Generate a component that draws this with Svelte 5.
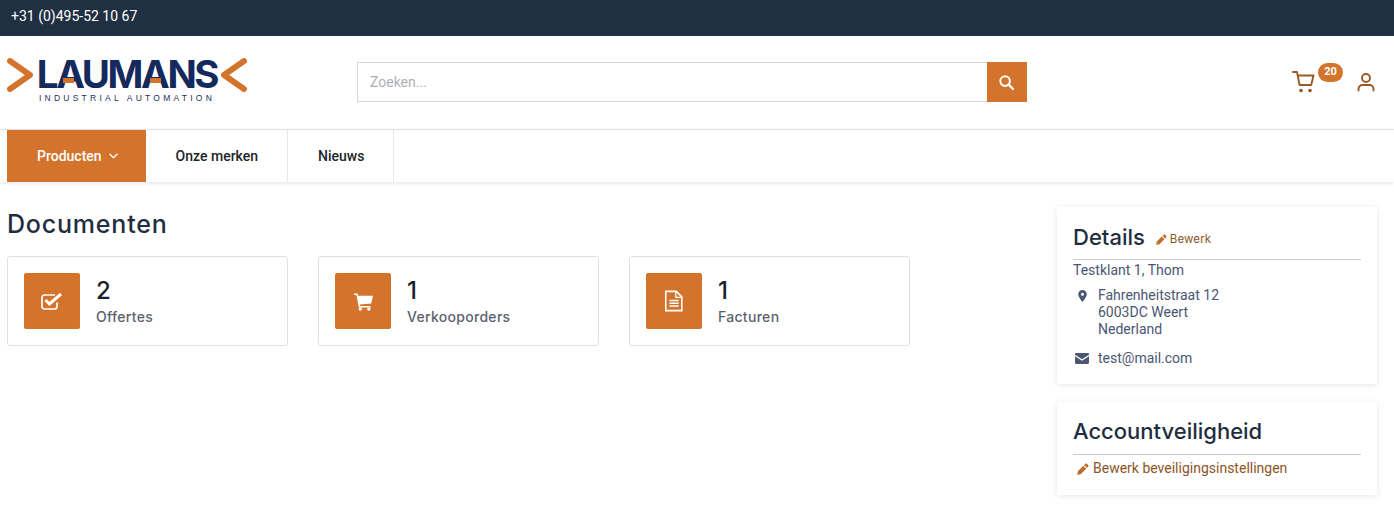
<script>
    const docs = [
        { count: 2, label: "Offertes", icon: "check" },
        { count: 1, label: "Verkooporders", icon: "cart" },
        { count: 1, label: "Facturen", icon: "file" }
    ];
</script>

{#snippet pencil()}
    <svg class="pencil" viewBox="0 0 12 12" aria-hidden="true">
        <path d="M8.400 .7a1 1 0 0 1 1.400 0l1.500 1.500a1 1 0 0 1 0 1.400L10 4.900 7.100 2zM6.300 2.800l2.900 2.900-5.500 5.500-3.500.7.7-3.600z" fill="currentColor" />
    </svg>
{/snippet}

<div class="topbar">+31 (0)495-52 10 67</div>

<header class="header">
    <div class="logo">
        <svg class="chev" viewBox="0 0 26 34" aria-hidden="true">
            <path d="M3 3l20 14L3 31" fill="none" stroke="#d4742c" stroke-width="5.800" stroke-linecap="round" stroke-linejoin="round" />
        </svg>
        <div class="logo-text">
            <span class="logo-name">LAUMANS</span>
            <span class="logo-sub">INDUSTRIAL AUTOMATION</span>
            <span class="bar first"></span>
            <span class="bar second"></span>
        </div>
        <svg class="chev" viewBox="0 0 26 34" aria-hidden="true">
            <path d="M23 3L3 17l20 14" fill="none" stroke="#d4742c" stroke-width="5.800" stroke-linecap="round" stroke-linejoin="round" />
        </svg>
    </div>

    <div class="search">
        <input type="text" placeholder="Zoeken..." />
        <button type="button" aria-label="Zoeken">
            <svg viewBox="0.500 0.500 15 15" width="15" height="15" aria-hidden="true">
                <circle cx="6.600" cy="6.600" r="4.800" fill="none" stroke="#fff" stroke-width="2" />
                <path d="M10.200 10.200l4.300 4.300" stroke="#fff" stroke-width="2.400" stroke-linecap="round" />
            </svg>
        </button>
    </div>

    <div class="header-icons">
        <div class="cart">
            <svg viewBox="0 0 24 24" width="24" height="24" fill="none" stroke="#9a5a26" stroke-width="1.900" stroke-linecap="round" stroke-linejoin="round" aria-hidden="true">
                <path d="M1 2h4l2.600 13h11.600l2.300-9.500H6" />
                <circle cx="9" cy="20.500" r="0.900" fill="#9a5a26" />
                <circle cx="18" cy="20.500" r="0.900" fill="#9a5a26" />
            </svg>
            <span class="badge">20</span>
        </div>
        <svg class="user" viewBox="0 0 20 20" width="20" height="20" fill="none" stroke="#9a5a26" stroke-width="1.900" stroke-linecap="round" aria-hidden="true">
            <circle cx="10" cy="6" r="4" />
            <path d="M2.500 18.500v-1.500a4 4 0 0 1 4-4h7a4 4 0 0 1 4 4v1.500" />
        </svg>
    </div>
</header>

<nav class="nav">
    <a class="nav-item active" href="#producten">
        Producten
        <svg viewBox="0 0 10 6" width="9" height="6" fill="none" stroke="#fff" stroke-width="1.400" stroke-linecap="round" stroke-linejoin="round" aria-hidden="true">
            <path d="M1 1l4 4 4-4" />
        </svg>
    </a>
    <a class="nav-item" href="#merken">Onze merken</a>
    <a class="nav-item" href="#nieuws">Nieuws</a>
</nav>

<main class="page">
    <section class="docs">
        <h1>Documenten</h1>
        <div class="doc-grid">
            {#each docs as doc}
                <div class="doc-card">
                    <div class="doc-icon">
                        {#if doc.icon === "check"}
                            <svg viewBox="0 0 22 18" width="22" height="18" fill="none" stroke="#fff" aria-hidden="true">
                                <path d="M16 10.500v4a2.500 2.500 0 0 1-2.500 2.500h-10A2.500 2.500 0 0 1 1 14.500V5.500A2.500 2.500 0 0 1 3.500 3H14" stroke-width="1.700" />
                                <path d="M4.500 8l4 4L20 2" stroke-width="3" />
                            </svg>
                        {:else if doc.icon === "cart"}
                            <svg viewBox="0 0 20 20" width="21" height="19" aria-hidden="true">
                                <path d="M0 1.500h3.800l.5 2.500H20l-1.800 8L6 13.200l.3 1.500H17.400v1.600H5L2.600 3.200H0z" fill="#fff" />
                                <circle cx="6.600" cy="18" r="1.800" fill="#fff" />
                                <circle cx="15.600" cy="18" r="1.800" fill="#fff" />
                            </svg>
                        {:else}
                            <svg viewBox="0 0 20 24" width="20" height="22" fill="none" stroke="#fff" aria-hidden="true">
                                <path d="M1 1.500h11.500l6 6V22.500H1z" stroke-width="1.700" />
                                <path d="M12 1.500V8h6.500" stroke-width="1.400" />
                                <path d="M5 11.500h10M5 14.500h10M5 17.500h10" stroke-width="1.500" />
                            </svg>
                        {/if}
                    </div>
                    <div class="doc-text">
                        <span class="doc-count">{doc.count}</span>
                        <span class="doc-label">{doc.label}</span>
                    </div>
                </div>
            {/each}
        </div>
    </section>

    <aside class="side">
        <div class="panel">
            <div class="panel-head">
                <h2>Details</h2>
                <a class="edit-small" href="#bewerk">{@render pencil()}Bewerk</a>
            </div>
            <div class="name">Testklant 1, Thom</div>
            <div class="row address">
                <svg class="row-icon" viewBox="0 0 10 14" width="9" height="12" aria-hidden="true">
                    <path fill-rule="evenodd" d="M5 0a5 5 0 0 1 5 5c0 2.600-3.400 7.200-5 9-1.600-1.800-5-6.400-5-9a5 5 0 0 1 5-5zm0 3.200a1.800 1.800 0 1 0 0 3.600 1.800 1.800 0 0 0 0-3.600z" fill="#4a5674" />
                </svg>
                <div>Fahrenheitstraat 12<br />6003DC Weert<br />Nederland</div>
            </div>
            <div class="row mail">
                <svg class="row-icon" viewBox="0 0 14 11" width="14" height="11" aria-hidden="true">
                    <path d="M0 1.200C0 .5.500 0 1.200 0h11.600c.7 0 1.200.5 1.200 1.200v.6L7 6.200 0 1.800zM0 3.300l7 4.400 7-4.400v6.500c0 .7-.5 1.200-1.200 1.200H1.200C.5 11 0 10.500 0 9.800z" fill="#4a5674" />
                </svg>
                <div>test@mail.com</div>
            </div>
        </div>

        <div class="panel">
            <div class="panel-head tall">
                <h2>Accountveiligheid</h2>
            </div>
            <a class="edit-link" href="#beveiliging">{@render pencil()}Bewerk beveiligingsinstellingen</a>
        </div>
    </aside>
</main>

<style>
    :global(body) {
        margin: 0;
        background: #fff;
        font-family: Roboto, "Liberation Sans", sans-serif;
        font-size: 14px;
    }

    a {
        text-decoration: none;
        color: inherit;
    }

    .topbar {
        height: 36px;
        padding-left: 11px;
        background: #212f42;
        color: #fff;
        line-height: 32px;
        font-size: 14px;
    }

    .header {
        display: flex;
        align-items: center;
        height: 94px;
        padding: 0 18px 1px 7px;
        box-sizing: border-box;
        border-bottom: 1px solid #e5e7eb;
    }

    .logo {
        display: flex;
        align-items: flex-start;
        gap: 4px;
        width: 350px;
        margin-bottom: 3px;
        flex: none;
    }

    .chev {
        width: 26px;
        height: 34px;
    }

    .logo-text {
        position: relative;
        display: flex;
        flex-direction: column;
        align-items: center;
        width: 180px;
    }

    .logo-name {
        font-family: Inter, sans-serif;
        font-size: 38.500px;
        line-height: 32px;
        font-weight: 700;
        letter-spacing: -2.400px;
        color: #14295c;
    }

    .logo-sub {
        margin-top: 3px;
        font-family: "Liberation Sans", sans-serif;
        font-size: 8.500px;
        line-height: 10px;
        letter-spacing: 3.250px;
        color: #1f2f58;
        white-space: nowrap;
    }

    /* orange crossbars on the two A's */
    .bar {
        position: absolute;
        top: 20px;
        width: 11px;
        height: 5px;
        background: #d4742c;
    }

    .bar.first {
        left: 26px;
    }

    .bar.second {
        left: 113px;
    }

    .search {
        display: flex;
        width: 670px;
        height: 40px;
    }

    .search input {
        flex: 1;
        min-width: 0;
        padding: 0 12px;
        border: 1px solid #d9d9d9;
        border-right: none;
        outline: none;
        font-family: inherit;
        font-size: 14px;
    }

    .search input::placeholder {
        color: #adb0b5;
    }

    .search button {
        display: grid;
        place-items: center;
        width: 40px;
        padding: 0 2px 0 0;
        border: none;
        background: #d4742c;
    }

    .header-icons {
        display: flex;
        align-items: center;
        margin-left: auto;
    }

    .cart {
        position: relative;
        width: 50px;
        height: 24px;
        margin-right: 14px;
    }

    .badge {
        position: absolute;
        top: -7px;
        left: 26px;
        width: 25px;
        height: 19px;
        border-radius: 10px;
        background: #d4742c;
        color: #fff;
        font-size: 11px;
        font-weight: 700;
        line-height: 18px;
        text-align: center;
    }

    .user {
        margin-bottom: 1px;
    }

    .nav {
        display: flex;
        height: 52px;
        padding-left: 7px;
        box-shadow: 0 1px 4px rgba(0, 0, 0, 0.12);
    }

    .nav-item {
        display: flex;
        align-items: center;
        gap: 7px;
        padding: 0 29px 0 30px;
        border-right: 1px solid #e5e7eb;
        color: #212529;
        font-size: 14px;
        font-weight: 500;
    }

    .nav-item.active {
        padding: 0 28px 0 30px;
        border-right: none;
        background: #d4742c;
        color: #fff;
    }

    .page {
        display: flex;
        justify-content: space-between;
        padding: 25px 17px 20px 7px;
    }

    h1 {
        margin: 0 0 16px;
        padding-top: 1px;
        font-family: Inter, sans-serif;
        font-size: 25px;
        line-height: 32px;
        font-weight: 500;
        letter-spacing: 0.800px;
        color: #1f2d40;
    }

    .doc-grid {
        display: flex;
        gap: 30px;
    }

    .doc-card {
        display: flex;
        align-items: center;
        gap: 16px;
        width: 281px;
        height: 90px;
        box-sizing: border-box;
        padding: 0 16px;
        border: 1px solid #e0e0e3;
        border-radius: 3px;
    }

    .doc-icon {
        display: grid;
        place-items: center;
        width: 56px;
        height: 56px;
        border-radius: 2px;
        background: #d4742c;
    }

    .doc-text {
        display: flex;
        flex-direction: column;
        padding-top: 4px;
    }

    .doc-count {
        font-family: Inter, sans-serif;
        font-size: 24px;
        line-height: 28px;
        font-weight: 500;
        color: #1b1f2a;
    }

    .doc-label {
        font-family: Inter, sans-serif;
        font-size: 14px;
        line-height: 24px;
        font-weight: 500;
        letter-spacing: 0.300px;
        color: #5c6270;
    }

    .side {
        display: flex;
        flex-direction: column;
        gap: 18px;
        width: 320px;
    }

    .panel {
        padding: 16px 16px 17px;
        background: #fff;
        box-shadow: 0 1px 6px rgba(0, 0, 0, 0.1);
        border-radius: 2px;
    }

    .panel-head {
        display: flex;
        align-items: flex-start;
        gap: 11px;
        height: 36px;
        border-bottom: 1px solid #c9ccd1;
    }

    .panel-head.tall h2 {
        line-height: 26px;
    }

    h2 {
        margin: 0;
        font-family: Inter, sans-serif;
        font-size: 22px;
        line-height: 28px;
        font-weight: 500;
        color: #1f2d40;
    }

    .edit-small {
        display: flex;
        align-items: center;
        gap: 3px;
        margin-top: 9px;
        font-family: Inter, sans-serif;
        font-size: 11.500px;
        letter-spacing: 0.100px;
        color: #8d5526;
    }

    .pencil {
        width: 11px;
        height: 11px;
        color: #c06f2b;
    }

    .name {
        margin-top: 2px;
        line-height: 17px;
        color: #4b5671;
    }

    .row {
        display: flex;
        color: #4b5671;
        line-height: 17px;
    }

    .row-icon {
        flex: none;
        margin-top: 3px;
    }

    .address {
        margin-top: 8px;
        padding-left: 5px;
        gap: 11px;
    }

    .mail {
        margin-top: 12px;
        padding-left: 2px;
        gap: 9px;
    }

    .edit-link {
        display: flex;
        align-items: center;
        gap: 4px;
        margin-top: 5px;
        margin-bottom: 1px;
        padding-left: 4px;
        line-height: 17px;
        color: #8d5526;
    }

    .edit-link .pencil {
        width: 12px;
        height: 12px;
    }
</style>
